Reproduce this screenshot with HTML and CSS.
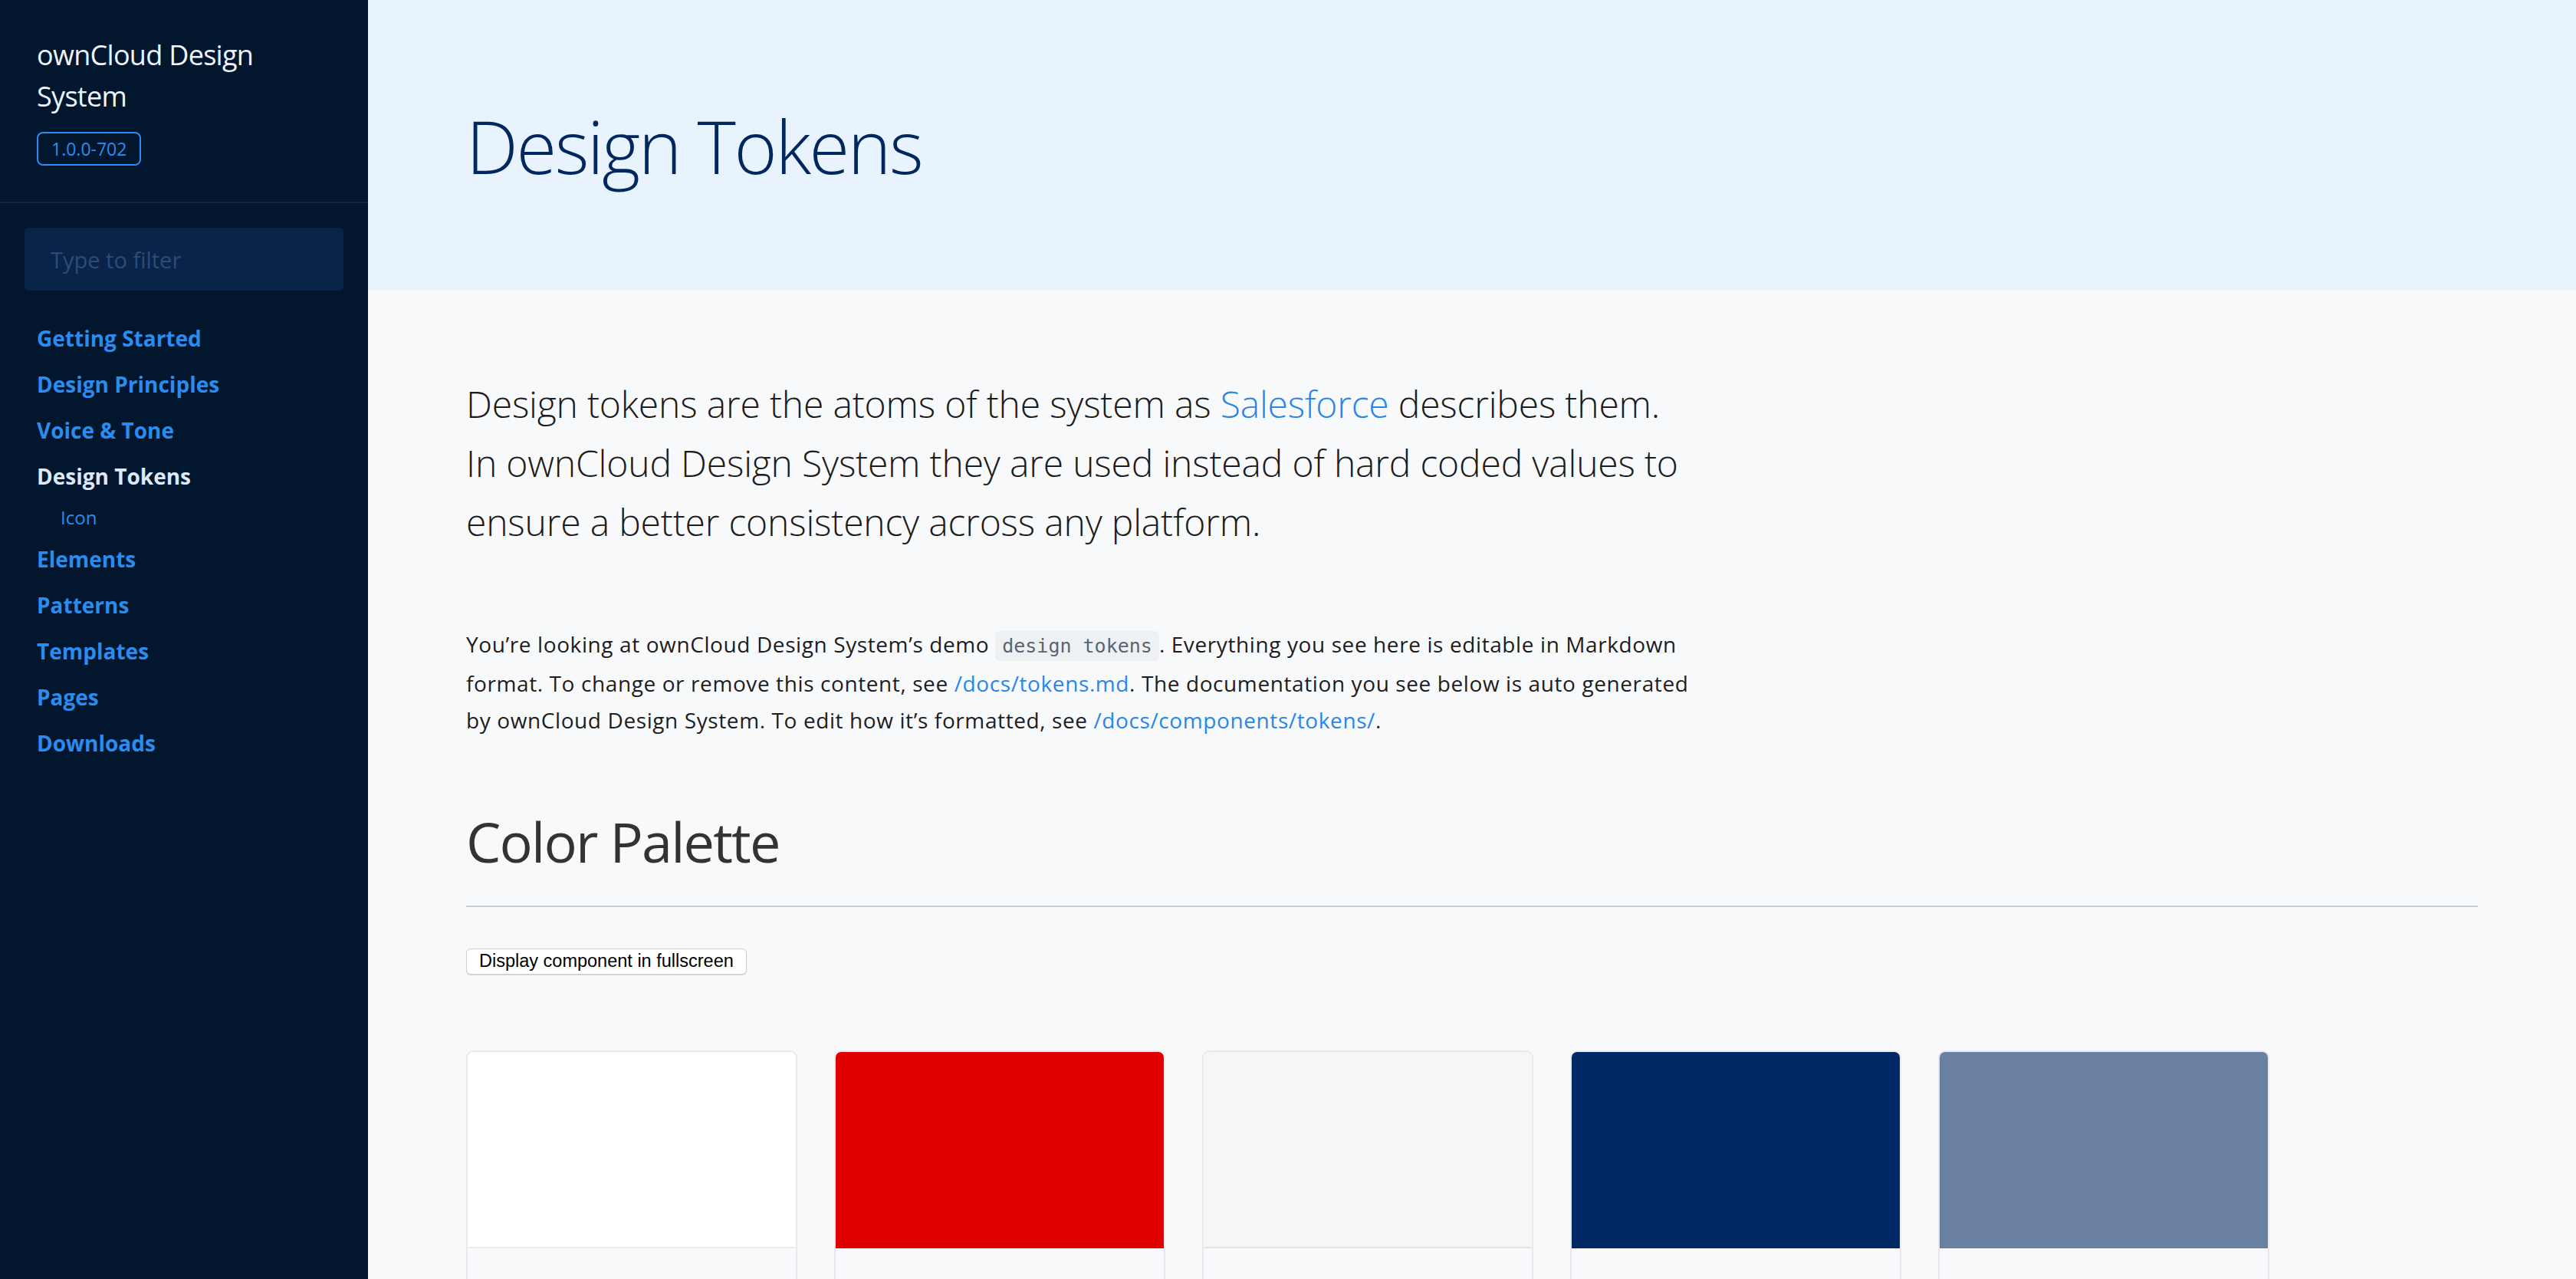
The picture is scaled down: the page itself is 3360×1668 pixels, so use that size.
FILE: index.html
```html
<!DOCTYPE html>
<html lang="en">
<head>
<meta charset="utf-8">
<title>Design Tokens · ownCloud Design System</title>
<link rel="stylesheet" href="styles.css">
</head>
<body>
<aside class="sidebar">
  <div class="brand">
    <div class="brand-title">ownCloud Design System</div>
    <span class="version">1.0.0-702</span>
  </div>
  <div class="nav-area">
    <input class="filter" type="text" placeholder="Type to filter">
    <ul class="nav">
      <li class="nav-item"><a href="#">Getting Started</a></li>
      <li class="nav-item"><a href="#">Design Principles</a></li>
      <li class="nav-item"><a href="#">Voice &amp; Tone</a></li>
      <li class="nav-item active"><a href="#">Design Tokens</a></li>
      <li class="nav-sub"><a href="#">Icon</a></li>
      <li class="nav-item"><a href="#">Elements</a></li>
      <li class="nav-item"><a href="#">Patterns</a></li>
      <li class="nav-item"><a href="#">Templates</a></li>
      <li class="nav-item"><a href="#">Pages</a></li>
      <li class="nav-item"><a href="#">Downloads</a></li>
    </ul>
  </div>
</aside>
<main class="main">
  <header class="page-header">
    <h1 class="page-title">Design Tokens</h1>
  </header>
  <div class="content">
    <p class="lead">Design tokens are the atoms of the system as <a href="#">Salesforce</a> describes them.<br>In ownCloud Design System they are used instead of hard coded values to ensure a better consistency across any platform.</p>
    <p class="intro">You’re looking at ownCloud Design System’s demo <code>design tokens</code>. Everything you see here is editable in Markdown format. To change or remove this content, see <a href="#">/docs/tokens.md</a>. The documentation you see below is auto generated by ownCloud Design System. To edit how it’s formatted, see <a href="#">/docs/components/tokens/</a>.</p>
    <h2 class="section-title">Color Palette</h2>
    <button class="fullscreen-btn" type="button">Display component in fullscreen</button>
    <div class="swatches">
      <div class="swatch-card"><div class="swatch swatch-white"></div><div class="swatch-body"></div></div>
      <div class="swatch-card"><div class="swatch swatch-red"></div><div class="swatch-body"></div></div>
      <div class="swatch-card"><div class="swatch swatch-light"></div><div class="swatch-body"></div></div>
      <div class="swatch-card"><div class="swatch swatch-navy"></div><div class="swatch-body"></div></div>
      <div class="swatch-card"><div class="swatch swatch-slate"></div><div class="swatch-body"></div></div>
    </div>
  </div>
</main>
</body>
</html>
```
FILE: styles.css
```css
* { box-sizing: border-box; }

html, body {
  margin: 0;
  padding: 0;
}

body {
  display: flex;
  min-height: 100vh;
  font-family: "Open Sans", "Noto Sans", sans-serif;
  background: #f8f9fb;
  color: #1d1d1d;
}

a { text-decoration: none; }

/* Sidebar */
.sidebar {
  flex: 0 0 480px;
  width: 480px;
  min-height: 100vh;
  background: #02162e;
}

.brand {
  padding: 45px 48px 47px;
  border-bottom: 2px solid #17263a;
}

.brand-title {
  font-size: 36px;
  line-height: 54px;
  font-weight: 500;
  letter-spacing: -0.7px;
  color: #eef4fc;
  width: 300px;
}

.version {
  display: inline-block;
  margin-top: 19px;
  height: 44px;
  padding: 0 17px;
  border: 2px solid #2a8cf0;
  border-radius: 8px;
  font-size: 23px;
  line-height: 40px;
  font-weight: 500;
  color: #2a8cf0;
}

.nav-area {
  padding: 32px 32px 0;
}

.filter {
  display: block;
  width: 416px;
  height: 82px;
  border: 0;
  border-radius: 6px;
  background: #0a2449;
  padding: 0 34px;
  font-family: inherit;
  font-size: 29px;
  color: #cfe0f5;
  outline: none;
}

.filter::placeholder { color: #2c4b77; }

.nav {
  list-style: none;
  margin: 32px 0 0;
  padding: 0 0 0 16px;
}

.nav-item {
  font-size: 28px;
  line-height: 60px;
  font-weight: 700;
}

.nav-item a { color: #2b8cee; }
.nav-item.active a { color: #dde8f8; }

.nav-sub {
  font-size: 24px;
  line-height: 48px;
  padding-left: 31px;
}

.nav-sub a { color: #2b8cee; }

/* Main */
.main {
  flex: 1 1 auto;
  min-width: 0;
}

.page-header {
  height: 379px;
  background: #e9f3fd;
  display: flex;
  align-items: center;
  padding: 0 128px;
}

.page-title {
  margin: 0;
  font-size: 96px;
  line-height: 1.2;
  font-weight: 300;
  letter-spacing: -2.4px;
  color: #00285e;
}

.content {
  padding: 110px 128px 0;
}

.lead {
  margin: 0;
  max-width: 1640px;
  font-size: 48px;
  line-height: 76.8px;
  font-weight: 300;
  letter-spacing: -0.18px;
  color: #1c1c1c;
}

.lead a, .intro a { color: #2a86e6; }

.intro {
  margin: 97px 0 0;
  max-width: 1600px;
  font-size: 28px;
  line-height: 48px;
  letter-spacing: 0.6px;
  color: #1d1d1d;
}

.intro code {
  font-family: "DejaVu Sans Mono", "Liberation Mono", monospace;
  font-size: 25px;
  letter-spacing: 0;
  background: #eef1f4;
  color: #5b6470;
  padding: 5px 9px;
  border-radius: 6px;
}

.section-title {
  margin: 91px 0 0;
  padding-bottom: 40px;
  border-bottom: 2px solid #c9cfd7;
  font-size: 72px;
  line-height: 1.2;
  font-weight: 400;
  letter-spacing: -1.8px;
  color: #333333;
}

.fullscreen-btn {
  display: block;
  margin-top: 54px;
  height: 34px;
  padding: 0 16px;
  background: #ffffff;
  border: 1px solid #cfcfcf;
  border-radius: 6px;
  box-shadow: 0 1px 1px rgba(0, 0, 0, 0.15);
  font-family: "Liberation Sans", Arial, sans-serif;
  font-size: 23.5px;
  color: #000000;
}

.swatches {
  display: flex;
  gap: 48px;
  margin-top: 99px;
}

.swatch-card {
  flex: 0 0 432px;
  border-radius: 9px;
  overflow: hidden;
  border: 2px solid #e7e9ec;
  background: #f8f9fb;
}

.swatch {
  height: 258px;
  margin: -2px -2px 0;
  border-bottom: 2px solid rgba(0, 0, 0, 0.07);
}

.swatch-white { background: #ffffff; margin: 0; height: 256px; }
.swatch-light { background: #f6f6f6; margin: 0; height: 256px; }
.swatch-red { background: #e00000; border-bottom: 0; }
.swatch-navy { background: #002864; border-bottom: 0; }
.swatch-slate { background: #6980a1; border-bottom: 0; }

.swatch-body {
  height: 180px;
}
```
